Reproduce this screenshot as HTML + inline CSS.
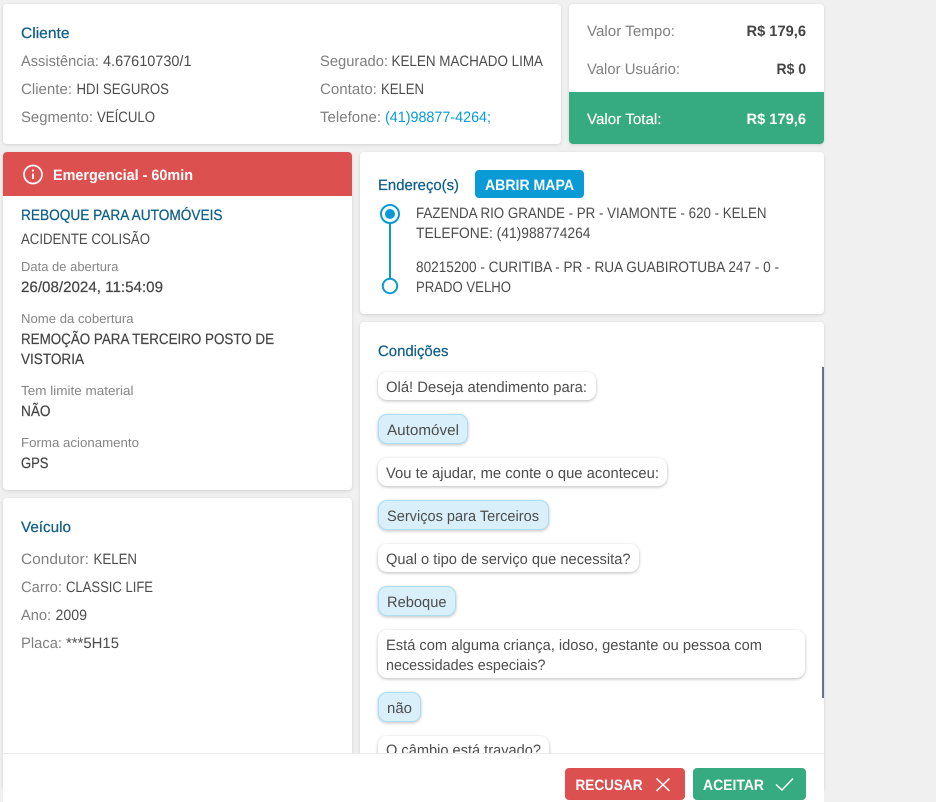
<!DOCTYPE html>
<html lang="pt-BR">
<head>
<meta charset="utf-8">
<title>Atendimento</title>
<style>
html,body{margin:0;padding:0;width:936px;height:802px;overflow:hidden;background:#f0f0f0}
.a{position:absolute;box-sizing:border-box}
.card{background:#fff;border-radius:4px;box-shadow:0 1px 3px rgba(0,0,0,.13)}
.b{background:#fff;border-radius:9px;box-shadow:0 1px 3px rgba(0,0,0,.28);left:378px}
.u{background:#d9f0fa;border:1px solid #a9def5;border-radius:9px;box-shadow:0 1px 3px rgba(0,0,0,.25);left:378px}
svg{position:absolute;left:0;top:0}
text{font-family:"Liberation Sans",sans-serif;font-size:15px;fill:#4d4d4d;text-rendering:geometricPrecision}
.l{fill:#808080}
.s{font-size:13px;fill:#858585}
.h{fill:#0f5f88;stroke:#0f5f88;stroke-width:.25px}
.m{fill:#444;stroke:#444;stroke-width:.2px}
.v{fill:#444;font-weight:700}
.w{fill:#fff;font-weight:700}
.t{fill:#fff;stroke:#fff;stroke-width:.15px}
</style>
</head>
<body>
<!-- cards -->
<div class="a card" style="left:3px;top:4px;width:558px;height:140px"></div>
<div class="a card" style="left:569px;top:4px;width:255px;height:140px;overflow:hidden"><div class="a" style="left:0;top:88px;width:255px;height:52px;background:#36aa80"></div></div>
<div class="a card" style="left:3px;top:152px;width:349px;height:338px;overflow:hidden"><div class="a" style="left:0;top:0;width:349px;height:44px;background:#dc5050"></div></div>
<div class="a card" style="left:3px;top:498px;width:349px;height:290px"></div>
<div class="a card" style="left:360px;top:152px;width:464px;height:162px"></div>
<div class="a card" style="left:360px;top:322px;width:464px;height:470px"></div>
<div class="a" style="left:822px;top:367px;width:2px;height:331px;background:#66728a"></div>
<div class="a" style="left:475px;top:170px;width:109px;height:28px;background:#0a9ad6;border-radius:4px"></div>
<!-- bubbles -->
<div class="a b" style="top:372px;width:218px;height:28px"></div>
<div class="a u" style="top:414px;width:90px;height:30px"></div>
<div class="a b" style="top:458px;width:289px;height:28px"></div>
<div class="a u" style="top:500px;width:171px;height:30px"></div>
<div class="a b" style="top:544px;width:261px;height:28px"></div>
<div class="a u" style="top:586px;width:78px;height:30px"></div>
<div class="a b" style="top:630px;width:427px;height:48px"></div>
<div class="a u" style="top:692px;width:43px;height:30px"></div>
<div class="a b" style="top:736px;width:171px;height:28px"></div>

<svg width="936" height="802" viewBox="0 0 936 802">
<!-- Cliente -->
<text class="h" x="21" y="38" textLength="48.5" lengthAdjust="spacingAndGlyphs">Cliente</text>
<text class="l" x="21" y="66" textLength="78" lengthAdjust="spacingAndGlyphs">Assistência:</text>
<text x="103" y="66" textLength="88.5" lengthAdjust="spacingAndGlyphs">4.67610730/1</text>
<text class="l" x="21" y="94" textLength="51" lengthAdjust="spacingAndGlyphs">Cliente:</text>
<text x="76.5" y="94" textLength="92.5" lengthAdjust="spacingAndGlyphs">HDI SEGUROS</text>
<text class="l" x="21" y="122" textLength="72" lengthAdjust="spacingAndGlyphs">Segmento:</text>
<text x="97" y="122" textLength="58" lengthAdjust="spacingAndGlyphs">VEÍCULO</text>
<text class="l" x="320" y="66" textLength="68" lengthAdjust="spacingAndGlyphs">Segurado:</text>
<text x="391.5" y="66" textLength="151.5" lengthAdjust="spacingAndGlyphs">KELEN MACHADO LIMA</text>
<text class="l" x="320" y="94" textLength="57" lengthAdjust="spacingAndGlyphs">Contato:</text>
<text x="381" y="94" textLength="43" lengthAdjust="spacingAndGlyphs">KELEN</text>
<text class="l" x="320" y="122" textLength="61" lengthAdjust="spacingAndGlyphs">Telefone:</text>
<text x="385" y="122" textLength="106" lengthAdjust="spacingAndGlyphs" style="fill:#0a9ad6">(41)98877-4264;</text>
<!-- Valores -->
<text class="l" x="587" y="36" textLength="88" lengthAdjust="spacingAndGlyphs">Valor Tempo:</text>
<text class="v" x="746.5" y="36" textLength="59.5" lengthAdjust="spacingAndGlyphs">R$ 179,6</text>
<text class="l" x="587" y="74" textLength="93" lengthAdjust="spacingAndGlyphs">Valor Usuário:</text>
<text class="v" x="776.5" y="74" textLength="29.5" lengthAdjust="spacingAndGlyphs">R$ 0</text>
<text class="t" x="587" y="124" textLength="74.5" lengthAdjust="spacingAndGlyphs">Valor Total:</text>
<text class="w" x="746.5" y="124" textLength="59.5" lengthAdjust="spacingAndGlyphs">R$ 179,6</text>
<!-- Emergencial -->
<circle cx="33" cy="174.500" r="9" fill="none" stroke="#fff" stroke-width="1.7"/>
<path d="M33 173.500v5.500M33 169.500v2" fill="none" stroke="#fff" stroke-width="1.8"/>
<text class="w" x="53" y="180" textLength="140" lengthAdjust="spacingAndGlyphs">Emergencial - 60min</text>
<text class="h" x="21" y="220" textLength="201.5" lengthAdjust="spacingAndGlyphs">REBOQUE PARA AUTOMÓVEIS</text>
<text x="21" y="244" textLength="129" lengthAdjust="spacingAndGlyphs">ACIDENTE COLISÃO</text>
<text class="s" x="21" y="271" textLength="97.5" lengthAdjust="spacingAndGlyphs">Data de abertura</text>
<text class="m" x="21" y="292" textLength="142" lengthAdjust="spacingAndGlyphs">26/08/2024, 11:54:09</text>
<text class="s" x="21" y="323" textLength="112.5" lengthAdjust="spacingAndGlyphs">Nome da cobertura</text>
<text class="m" x="21" y="344" textLength="253" lengthAdjust="spacingAndGlyphs">REMOÇÃO PARA TERCEIRO POSTO DE</text>
<text class="m" x="21" y="364" textLength="63" lengthAdjust="spacingAndGlyphs">VISTORIA</text>
<text class="s" x="21" y="395" textLength="112.5" lengthAdjust="spacingAndGlyphs">Tem limite material</text>
<text class="m" x="21" y="416" textLength="29.5" lengthAdjust="spacingAndGlyphs">NÃO</text>
<text class="s" x="21" y="447" textLength="118" lengthAdjust="spacingAndGlyphs">Forma acionamento</text>
<text class="m" x="21" y="468" textLength="27.5" lengthAdjust="spacingAndGlyphs">GPS</text>
<!-- Veículo -->
<text class="h" x="21" y="532" textLength="50" lengthAdjust="spacingAndGlyphs">Veículo</text>
<text class="l" x="21" y="564" textLength="68" lengthAdjust="spacingAndGlyphs">Condutor:</text>
<text x="93.5" y="564" textLength="43.5" lengthAdjust="spacingAndGlyphs">KELEN</text>
<text class="l" x="21" y="592" textLength="41" lengthAdjust="spacingAndGlyphs">Carro:</text>
<text x="66" y="592" textLength="87" lengthAdjust="spacingAndGlyphs">CLASSIC LIFE</text>
<text class="l" x="21" y="620" textLength="30" lengthAdjust="spacingAndGlyphs">Ano:</text>
<text x="55.5" y="620" textLength="31.5" lengthAdjust="spacingAndGlyphs">2009</text>
<text class="l" x="21" y="648" textLength="41" lengthAdjust="spacingAndGlyphs">Placa:</text>
<text x="66" y="648" textLength="53" lengthAdjust="spacingAndGlyphs">***5H15</text>
<!-- Endereços -->
<text class="h" x="378" y="190" textLength="81" lengthAdjust="spacingAndGlyphs">Endereço(s)</text>
<text class="w" x="485" y="190" textLength="89" lengthAdjust="spacingAndGlyphs">ABRIR MAPA</text>
<path d="M390 222v57" stroke="#0a9ad6" stroke-width="2" fill="none"/>
<circle cx="390" cy="214" r="9" fill="#fff" stroke="#0a9ad6" stroke-width="2"/>
<circle cx="390" cy="214" r="5" fill="#0a9ad6"/>
<circle cx="390" cy="286" r="7.200" fill="#fff" stroke="#0a9ad6" stroke-width="2"/>
<text x="416" y="218" textLength="350.5" lengthAdjust="spacingAndGlyphs">FAZENDA RIO GRANDE - PR - VIAMONTE - 620 - KELEN</text>
<text x="416" y="238" textLength="174.5" lengthAdjust="spacingAndGlyphs">TELEFONE: (41)988774264</text>
<text x="416" y="272" textLength="363" lengthAdjust="spacingAndGlyphs">80215200 - CURITIBA - PR - RUA GUABIROTUBA 247 - 0 -</text>
<text x="416" y="292" textLength="95" lengthAdjust="spacingAndGlyphs">PRADO VELHO</text>
<!-- Condições -->
<text class="h" x="378" y="356" textLength="70.5" lengthAdjust="spacingAndGlyphs">Condições</text>
<text x="386" y="392" textLength="201" lengthAdjust="spacingAndGlyphs">Olá! Deseja atendimento para:</text>
<text x="387" y="435" textLength="72" lengthAdjust="spacingAndGlyphs">Automóvel</text>
<text x="386" y="478" textLength="273" lengthAdjust="spacingAndGlyphs">Vou te ajudar, me conte o que aconteceu:</text>
<text x="387" y="521" textLength="152" lengthAdjust="spacingAndGlyphs">Serviços para Terceiros</text>
<text x="386" y="564" textLength="244.5" lengthAdjust="spacingAndGlyphs">Qual o tipo de serviço que necessita?</text>
<text x="387" y="607" textLength="59.5" lengthAdjust="spacingAndGlyphs">Reboque</text>
<text x="386" y="650" textLength="376" lengthAdjust="spacingAndGlyphs">Está com alguma criança, idoso, gestante ou pessoa com</text>
<text x="386" y="670" textLength="159.5" lengthAdjust="spacingAndGlyphs">necessidades especiais?</text>
<text x="387" y="713" textLength="25" lengthAdjust="spacingAndGlyphs">não</text>
<text x="386" y="755" textLength="155" lengthAdjust="spacingAndGlyphs">O câmbio está travado?</text>
</svg>

<!-- footer -->
<div class="a" style="left:3px;top:753px;width:821px;height:49px;background:#fff;border-top:1px solid #eaeaea"></div>
<div class="a" style="left:565px;top:768px;width:120px;height:32px;background:#dc5050;border-radius:4px"></div>
<div class="a" style="left:693px;top:768px;width:113px;height:32px;background:#36aa80;border-radius:4px"></div>
<svg width="936" height="802" viewBox="0 0 936 802">
<text class="w" x="575.500" y="790" textLength="67" lengthAdjust="spacingAndGlyphs">RECUSAR</text>
<path d="M656.500 778.500l13 12.500M669.500 778.500l-13 12.500" fill="none" stroke="#fff" stroke-width="1.500"/>
<text class="w" x="703" y="790" textLength="61" lengthAdjust="spacingAndGlyphs">ACEITAR</text>
<path d="M776 784.500l6 5.500 11-11.500" fill="none" stroke="#fff" stroke-width="1.500"/>
</svg>
</body>
</html>
